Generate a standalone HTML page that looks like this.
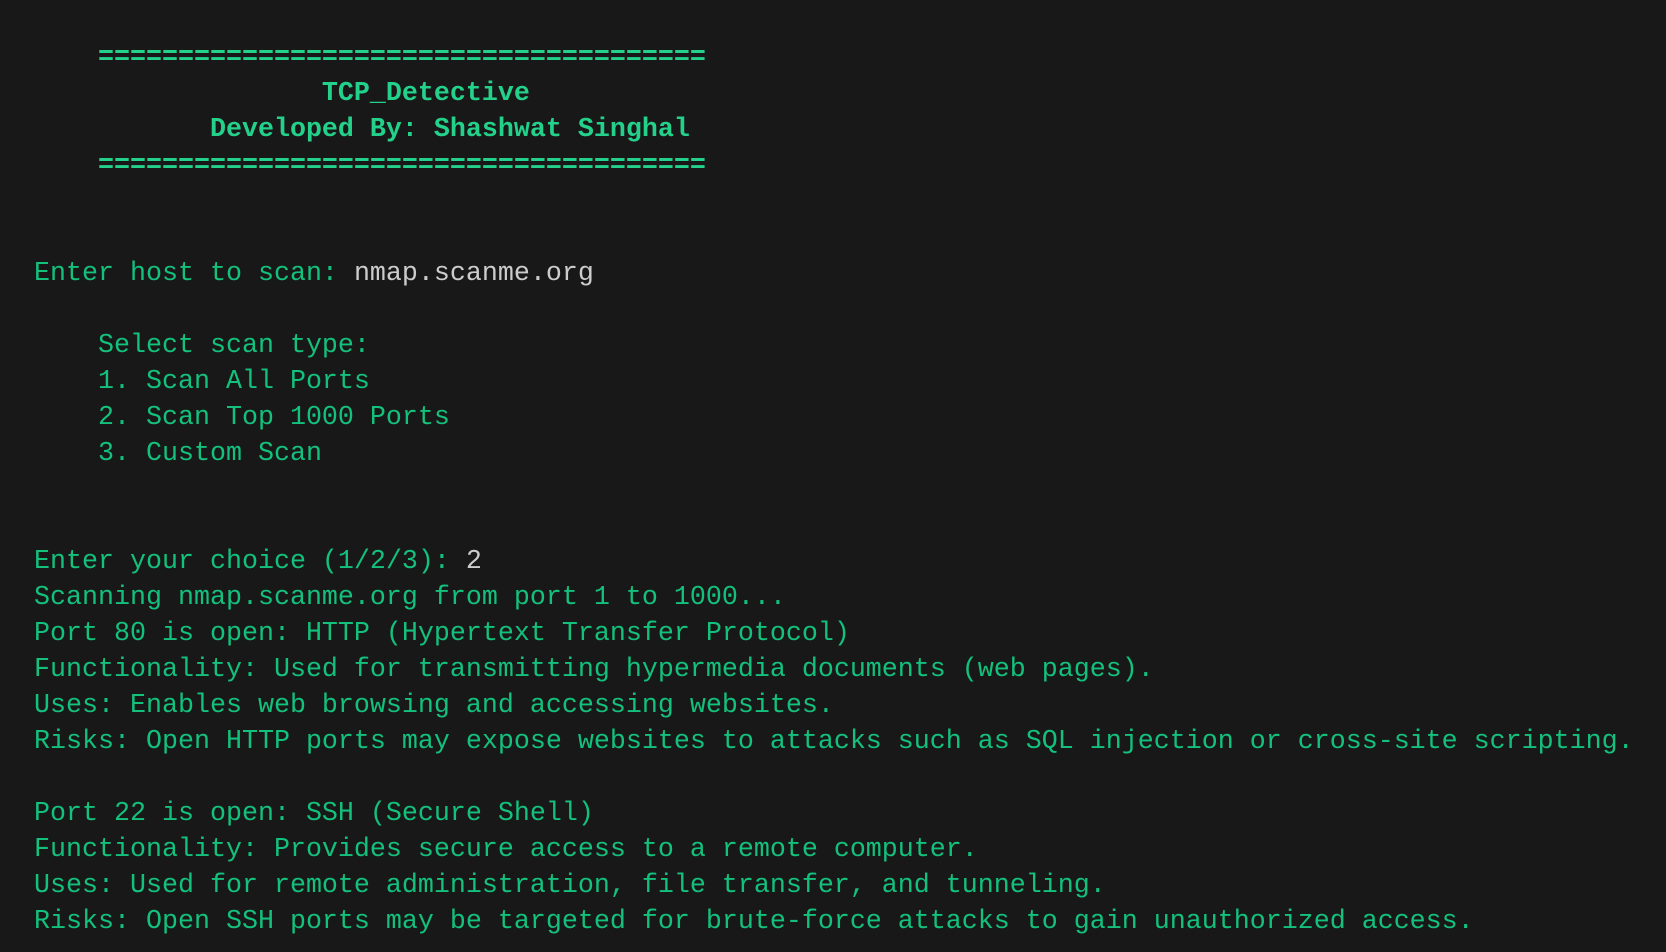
<!DOCTYPE html><html><head><style>
html,body{margin:0;background:#181818;width:1666px;height:952px;overflow:hidden}
pre{margin:0;position:absolute;left:34px;top:40px;font-family:"Liberation Mono",monospace;font-size:26.67px;line-height:36px;color:#13c07c;white-space:pre}
b{color:#23d18b}
i{font-style:normal;color:#cccccc}
</style></head><body><pre><b>    ======================================
                  TCP_Detective
           Developed By: Shashwat Singhal
    ======================================</b>


Enter host to scan: <i>nmap.scanme.org</i>

    Select scan type:
    1. Scan All Ports
    2. Scan Top 1000 Ports
    3. Custom Scan


Enter your choice (1/2/3): <i>2</i>
Scanning nmap.scanme.org from port 1 to 1000...
Port 80 is open: HTTP (Hypertext Transfer Protocol)
Functionality: Used for transmitting hypermedia documents (web pages).
Uses: Enables web browsing and accessing websites.
Risks: Open HTTP ports may expose websites to attacks such as SQL injection or cross-site scripting.

Port 22 is open: SSH (Secure Shell)
Functionality: Provides secure access to a remote computer.
Uses: Used for remote administration, file transfer, and tunneling.
Risks: Open SSH ports may be targeted for brute-force attacks to gain unauthorized access.</pre></body></html>
